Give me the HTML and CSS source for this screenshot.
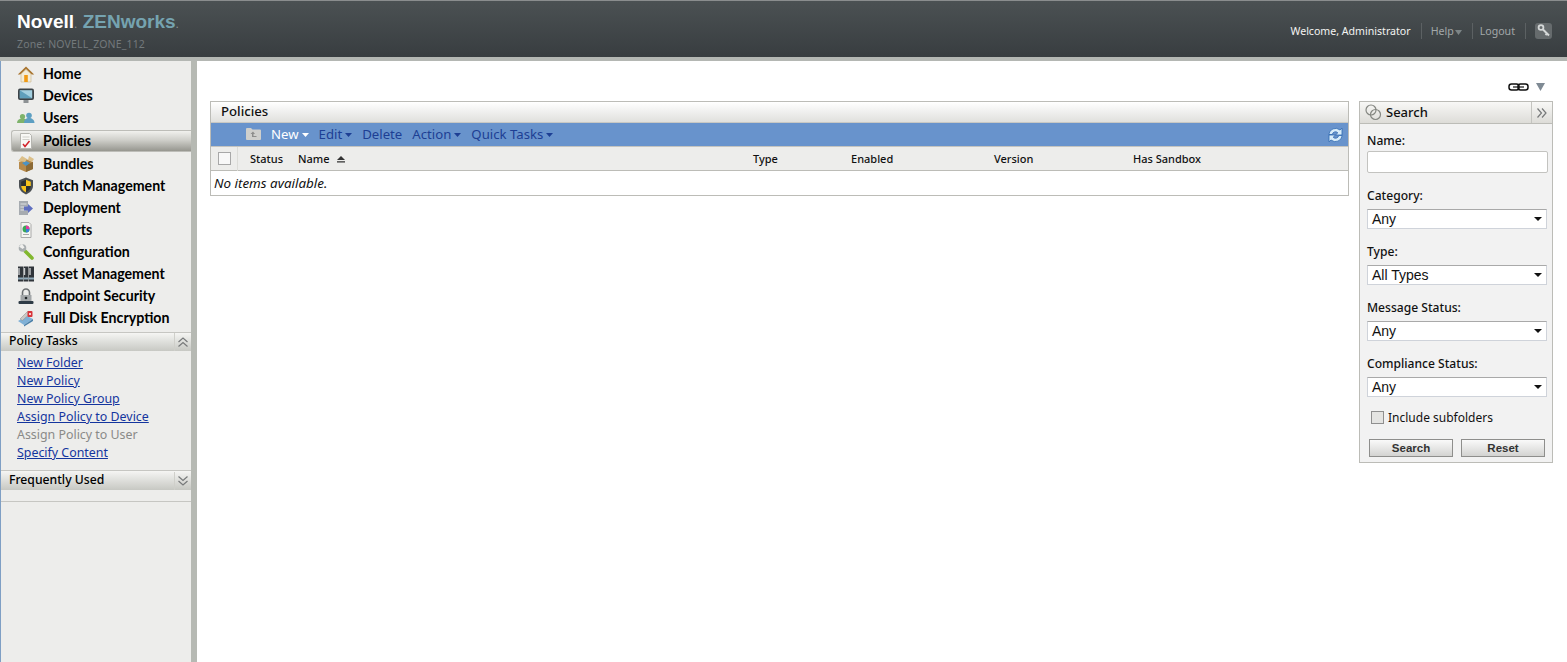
FILE: index.html
```html
<!DOCTYPE html>
<html lang="en">
<head>
<meta charset="utf-8">
<title>Novell ZENworks</title>
<link rel="stylesheet" href="styles.css">
</head>
<body>
<header class="topbar">
  <div class="brand">
    <div class="logo"><span class="logo-novell">Novell<small>.</small></span> <span class="logo-zen">ZENworks<small>.</small></span></div>
    <div class="zone">Zone: NOVELL_ZONE_112</div>
  </div>
  <nav class="topnav">
    <span class="welcome">Welcome, Administrator</span>
    <span class="topsep"></span>
    <span class="toplink">Help<svg class="help-arrow" width="7" height="5" viewBox="0 0 7 5"><path d="M0 0h7L3.5 5z" fill="#7d8587"/></svg></span>
    <span class="topsep"></span>
    <span class="toplink toplink-logout">Logout</span>
    <span class="topsep"></span>
    <span class="keybtn"><svg width="16" height="16" viewBox="0 0 16 16"><circle cx="5" cy="4.500" r="2.400" fill="none" stroke="#d5d8d8" stroke-width="1.800"/><path d="M7 6.500l6 6M11 10.500l-1.500 1.500" stroke="#d5d8d8" stroke-width="2"/></svg></span>
  </nav>
</header>
<div class="shell">
  <aside class="sidebar">
    <ul class="mainnav">
      <li class="navitem"><svg class="navicon" viewBox="0 0 18 18"><path d="M4 9L9 4.500 14 9v8H4z" fill="#f3ecd8" stroke="#c9b78c" stroke-width=".6"/><path d="M9 1.500L.8 9.500h2.400L9 4l5.800 5.500h2.400z" fill="#a9752f"/><path d="M7.200 10h3.600v7H7.200z" fill="#f09a14"/></svg>Home</li>
      <li class="navitem"><svg class="navicon" viewBox="0 0 18 18"><rect x="1" y="1.500" width="16" height="11.500" rx="2" fill="#3c4347"/><rect x="2.800" y="3.200" width="12.400" height="8" fill="#a4d0e0"/><path d="M2.800 3.200l12.400 8H2.800z" fill="#5f9fbb"/><rect x="6.500" y="13" width="5" height="3" fill="#8d9294"/></svg>Devices</li>
      <li class="navitem"><svg class="navicon" viewBox="0 0 18 18"><circle cx="5.500" cy="7.500" r="2.600" fill="#7eb36b"/><path d="M0 14c0-3 2-4.500 5.500-4.500S11 11 11 14z" fill="#7eb36b"/><circle cx="12" cy="6.500" r="2.800" fill="#5d9fc2"/><path d="M7 14c0-3 2-5 5-5s5.500 2 5.500 5z" fill="#5d9fc2"/></svg>Users</li>
      <li class="navitem selected"><svg class="navicon" viewBox="0 0 18 18"><path d="M3.500 1.500h9l2 2v13h-11z" fill="#f8f8f5" stroke="#b5b5b0"/><path d="M5.500 5h7M5.500 7.500h7" stroke="#cfcfca"/><path d="M6 12l2 2.500L12.500 9" fill="none" stroke="#d3222a" stroke-width="1.500"/></svg>Policies</li>
      <li class="navitem"><svg class="navicon" viewBox="0 0 18 18"><path d="M2 7l7-3 7 3v7l-7 3-7-3z" fill="#b78a4a"/><path d="M9 10l7-3v7l-7 3z" fill="#8c6a35"/><path d="M5 8l4-2 4 2-4 3z" fill="#4c93c4"/><path d="M1 6L5 1l5 3-2 3zM12 1l5 3-2 3-4-2z" fill="#dcc08a"/></svg>Bundles</li>
      <li class="navitem"><svg class="navicon" viewBox="0 0 18 18"><path d="M9 .500l7 2.800V9c0 4-3.500 7-7 8.500C5.500 16 2 13 2 9V3.300z" fill="#4a4f52"/><path d="M9 2.800l4.800 1.900V9H9zM9 9v6.300C6.500 14 4.200 12 4.200 9z" fill="#f5c21b"/><path d="M9 2.800V9H4.200V4.700zM9 9h4.800c0 3-2.300 5-4.800 6.300z" fill="#2b2f32"/></svg>Patch Management</li>
      <li class="navitem"><svg class="navicon" viewBox="0 0 18 18"><rect x="2" y="2" width="9" height="14" fill="#a6abb0"/><path d="M3.500 5h6M3.500 8h6M3.500 11h6" stroke="#dfe1e3"/><path d="M7 7.500h4V5l5 4.500-5 4.500v-2.500H7z" fill="#5f6fc0"/></svg>Deployment</li>
      <li class="navitem"><svg class="navicon" viewBox="0 0 18 18"><path d="M4 1.500h8l2 2v13H4z" fill="#f5f5f2" stroke="#aaa"/><circle cx="9" cy="8" r="3.500" fill="#3aa655"/><path d="M9 8V4.500A3.500 3.500 0 0 1 12.500 8z" fill="#e23aa0"/><path d="M9 8h3.500A3.500 3.500 0 0 1 9 11.500z" fill="#3a7fd6"/><path d="M6 13.500h6" stroke="#aaa"/></svg>Reports</li>
      <li class="navitem"><svg class="navicon" viewBox="0 0 18 18"><path d="M8.500 8.500l6.500 6.500" stroke="#82b82f" stroke-width="3.600" stroke-linecap="round"/><circle cx="5.500" cy="5" r="3.800" fill="#a9aeb0"/><path d="M5 .800L7.500 4.500 5.500 6 2 3.500z" fill="#f0f0ee"/></svg>Configuration</li>
      <li class="navitem"><svg class="navicon" viewBox="0 0 18 18"><rect x="1" y="1.500" width="5" height="15" fill="#30353a"/><rect x="6.500" y="1.500" width="5" height="15" fill="#30353a"/><rect x="12" y="1.500" width="5" height="15" fill="#30353a"/><path d="M2 3v7M7.500 3v7M13 3v7" stroke="#c9ccce" stroke-width="1.400"/><path d="M1 13.500h5M12 13.500h5M6.500 13.500h5" stroke="#8fa9b8" stroke-width="2"/></svg>Asset Management</li>
      <li class="navitem"><svg class="navicon" viewBox="0 0 18 18"><path d="M5.500 8V5.500a3.500 3.500 0 0 1 7 0V8" fill="none" stroke="#6d7173" stroke-width="1.600"/><rect x="3.500" y="8" width="11" height="6" fill="#a3a7a9"/><rect x="1.500" y="14" width="15" height="3" rx="1" fill="#2e3b46"/><circle cx="9" cy="11" r="1.300" fill="#25292c"/></svg>Endpoint Security</li>
      <li class="navitem"><svg class="navicon" viewBox="0 0 18 18"><path d="M1 12l9-5 6 3-9 6z" fill="#7fb0d6"/><path d="M7 16l9-6v2l-9 5.500z" fill="#4a7fa8"/><path d="M3 10l8-8 2.500 2-8 7.500z" fill="#c9c9c6" stroke="#8a8a88" stroke-width=".5"/><rect x="10.500" y="2" width="5" height="6" rx="1" fill="#d8353a"/><circle cx="13" cy="5" r="1" fill="#fff"/></svg>Full Disk Encryption</li>
    </ul>
    <section class="panel">
      <div class="panel-head"><span class="panel-title">Policy Tasks</span><span class="panel-toggle"><svg width="12" height="12" viewBox="0 0 12 12"><path d="M1.500 6L6 2l4.500 4M1.500 10.500L6 6.500l4.500 4" fill="none" stroke="#77797a" stroke-width="1.200"/></svg></span></div>
      <ul class="tasks">
        <li><a href="#">New Folder</a></li>
        <li><a href="#">New Policy</a></li>
        <li><a href="#">New Policy Group</a></li>
        <li><a href="#">Assign Policy to Device</a></li>
        <li class="task-off">Assign Policy to User</li>
        <li><a href="#">Specify Content</a></li>
      </ul>
    </section>
    <section class="panel panel-freq">
      <div class="panel-head"><span class="panel-title">Frequently Used</span><span class="panel-toggle"><svg width="12" height="12" viewBox="0 0 12 12"><path d="M1.500 1.500L6 5.500l4.500-4M1.500 6L6 10l4.500-4" fill="none" stroke="#77797a" stroke-width="1.200"/></svg></span></div>
      <div class="freq-body"></div>
    </section>
  </aside>
  <main class="content">
    <div class="linkbar">
      <svg width="21" height="10" viewBox="0 0 21 10"><rect x="1" y="2" width="10" height="6" rx="2.500" fill="none" stroke="#111" stroke-width="1.500"/><rect x="10" y="2" width="10" height="6" rx="2.500" fill="none" stroke="#111" stroke-width="1.500"/><path d="M5 5h11" stroke="#111" stroke-width="1.200"/></svg>
      <svg width="9" height="8" viewBox="0 0 9 8"><path d="M0 0h9L4.500 8z" fill="#7f8a94"/></svg>
    </div>
    <div class="columns">
      <section class="listing">
        <div class="listing-title">Policies</div>
        <div class="toolbar">
          <svg class="up-icon" width="15" height="13" viewBox="0 0 15 13"><path d="M0 2a1 1 0 0 1 1-1h4l1.500 1.500H14a1 1 0 0 1 1 1V12a1 1 0 0 1-1 1H1a1 1 0 0 1-1-1z" fill="#cfcfcc"/><path d="M7 4.500l-2.500 2.500H6v3h4.500V9H7.500V7H9z" fill="#8d8d8b"/></svg>
          <span class="tool tool-new">New<svg class="caret" width="7" height="4" viewBox="0 0 7 4"><path d="M0 0h7L3.500 4z"/></svg></span>
          <span class="tool">Edit<svg class="caret" width="7" height="4" viewBox="0 0 7 4"><path d="M0 0h7L3.500 4z"/></svg></span>
          <span class="tool">Delete</span>
          <span class="tool">Action<svg class="caret" width="7" height="4" viewBox="0 0 7 4"><path d="M0 0h7L3.500 4z"/></svg></span>
          <span class="tool">Quick Tasks<svg class="caret" width="7" height="4" viewBox="0 0 7 4"><path d="M0 0h7L3.500 4z"/></svg></span>
          <svg class="refresh" width="15" height="16" viewBox="0 0 15 16"><path d="M.8 7.500A6.800 6.800 0 0 1 12 3l2-1.800V8H7.500l2.300-2.200A3.200 3.200 0 0 0 4.300 7.500z" fill="#d6ebf9" stroke="#2f68b0" stroke-width=".8"/><path d="M14.200 8.500A6.800 6.800 0 0 1 3 13l-2 1.800V8h6.500l-2.300 2.200a3.200 3.200 0 0 0 5.500-1.700z" fill="#d6ebf9" stroke="#2f68b0" stroke-width=".8"/></svg>
        </div>
        <div class="thead">
          <span class="th-check"><span class="check-box"></span></span>
          <span class="th th-status">Status</span>
          <span class="th th-name">Name<svg class="sort" width="8" height="7" viewBox="0 0 8 7"><path d="M4 0l4 4H0zM0 5h8v.8H0zM0 6.400h8V7H0z" fill="#333"/></svg></span>
          <span class="th th-type">Type</span>
          <span class="th th-enabled">Enabled</span>
          <span class="th th-version">Version</span>
          <span class="th">Has Sandbox</span>
        </div>
        <div class="empty">No items available.</div>
      </section>
      <section class="search">
        <div class="search-head">
          <svg class="search-icon" width="17" height="17" viewBox="0 0 17 17"><circle cx="6" cy="6" r="5" fill="none" stroke="#858782" stroke-width="1.200"/><circle cx="10.500" cy="10.500" r="5" fill="none" stroke="#858782" stroke-width="1.200"/></svg>
          <span class="search-title">Search</span>
          <span class="search-toggle"><svg width="12" height="12" viewBox="0 0 12 12"><path d="M1.500 1.500L5.500 6l-4 4.500M6 1.500L10 6l-4 4.500" fill="none" stroke="#77797a" stroke-width="1.200"/></svg></span>
        </div>
        <form class="search-form">
          <label class="field-label">Name:</label>
          <input class="text-input" type="text">
          <label class="field-label">Category:</label>
          <div class="dropdown">Any</div>
          <label class="field-label">Type:</label>
          <div class="dropdown">All Types</div>
          <label class="field-label">Message Status:</label>
          <div class="dropdown">Any</div>
          <label class="field-label">Compliance Status:</label>
          <div class="dropdown">Any</div>
          <div class="subfolders"><span class="sub-check"></span>Include subfolders</div>
          <div class="buttons"><span class="btn">Search</span><span class="btn">Reset</span></div>
        </form>
      </section>
    </div>
  </main>
</div>
</body>
</html>
```
FILE: styles.css
```css
* { box-sizing: border-box; }
html, body { margin: 0; height: 100%; overflow: hidden; }
body { font-family: "Noto Sans", "DejaVu Sans", sans-serif; background: #fff; color: #111; display: flex; flex-direction: column; }
ul { list-style: none; margin: 0; padding: 0; }

.topbar { height: 61px; flex: none; display: flex; justify-content: space-between; background: linear-gradient(#4b5153, #383d40); border-top: 1px solid #8a8d8e; border-bottom: 4px solid #b4b7b3; color: #fff; }
.brand { padding: 10px 0 0 17px; width: 180px; }
.logo { font-family: "Liberation Sans", sans-serif; font-weight: 700; font-size: 19px; line-height: 22px; white-space: nowrap; }
.logo small { font-size: 12px; color: #8c9496; font-weight: 400; }
.logo-zen { color: #75a3b0; }
.zone { margin-top: 2px; font-size: 10.5px; line-height: 14px; color: #73797c; letter-spacing: 0.15px; }
.topnav { display: flex; align-items: center; padding: 0 15px 0 0; font-size: 10.6px; height: 60px; }
.welcome { color: #f4f4f2; }
.toplink { color: #a3a8a9; }
.toplink-logout { margin-left: -2px; }
.help-arrow { margin-left: 1px; }
.topsep { width: 1px; height: 16px; background: #5c6163; margin: 0 9px 0 10px; }
.keybtn { width: 17px; height: 16px; border-radius: 3px; background: #666b6d; display: flex; align-items: center; justify-content: center; }

.shell { flex: 1; display: flex; min-height: 0; }
.sidebar { width: 197px; flex: none; background: #ededeb; border-left: 1px solid #7f9fc4; border-right: 6px solid #b6b9b3; padding-top: 2px; }
.navitem { height: 22px; display: flex; align-items: center; padding-left: 16px; font-family: "Lato", "Noto Sans", sans-serif; font-size: 14.2px; line-height: 20px; font-weight: 700; color: #000; white-space: nowrap; }
.navicon { width: 18px; height: 18px; margin-right: 8px; flex: none; }
.navlabel { display: block; }
.navitem.selected { margin: 1px 0 1px 10px; padding-left: 5px; border: 1px solid #bdbdb8; border-right: 0; border-radius: 3px 0 0 3px; background: linear-gradient(#f1f1ee 0%, #cfcfca 45%, #96968f 100%); }

.panel-head { height: 19px; display: flex; align-items: center; background: linear-gradient(#f5f5f3, #c7c8c3); border-top: 1px solid #c6c6c2; padding-left: 8px; }
.panel-title { flex: 1; font-size: 12.2px; line-height: 14px; margin-top: -3px; color: #000; font-weight: 500; }
.panel-toggle { width: 17px; height: 18px; border-left: 1px solid #cfcfca; display: flex; align-items: center; justify-content: center; }
.panel { margin-top: 3px; }
.tasks { padding: 3px 0 8px 16px; font-size: 12.4px; line-height: 18px; }
.tasks a { color: #14359e; text-decoration: underline; }
.task-off { color: #8a8a88; }
.panel-freq { margin-top: 0; }
.panel-freq .panel-head { height: 20px; }
.panel-freq .panel-title { margin-top: -1px; }
.freq-body { height: 12px; border-bottom: 1px solid #c6c6c2; }

.content { flex: 1; min-width: 0; padding: 0 14px 0 13px; }
.linkbar { height: 40px; display: flex; align-items: center; justify-content: flex-end; gap: 7px; padding: 12px 8px 0 0; }
.columns { display: flex; align-items: flex-start; gap: 10px; }
.listing { flex: 1; min-width: 0; border: 1px solid #bcbcb7; }
.listing-title { height: 20px; padding-left: 10px; font-size: 13.2px; font-weight: 500; line-height: 18px; background: linear-gradient(#fff, #e0e0dd); }
.toolbar { height: 24px; background: #6893cc; display: flex; align-items: center; padding: 0 5px 2px 35px; font-size: 13.2px; color: #1d3f94; gap: 10px; border-top: 1px solid #c8c8c4; }
.up-icon { margin-right: 0; }
.tool { white-space: nowrap; }
.tool-new { color: #fff; }
.caret { margin-left: 3px; vertical-align: 2px; fill: #1d3f94; }
.tool-new .caret { fill: #fff; }
.refresh { margin-left: auto; margin-top: 2px; }
.thead { height: 25px; display: flex; align-items: center; background: #ededeb; border-top: 1px solid #c4c4c0; border-bottom: 1px solid #bcbcb7; font-size: 11px; font-weight: 500; }
.th-check { width: 27px; height: 24px; border-right: 1px solid #dcdcd8; display: flex; align-items: center; justify-content: center; }
.check-box { width: 13px; height: 13px; background: #f8f8f8; border: 1px solid #a8a8a8; }
.th { white-space: nowrap; }
.th-status { margin-left: 12px; width: 48px; }
.th-name { width: 455px; }
.sort { margin-left: 7px; }
.th-type { width: 98px; }
.th-enabled { width: 143px; }
.th-version { width: 139px; }
.empty { height: 24px; padding-left: 3px; font-size: 13.4px; font-style: italic; line-height: 25px; color: #111; }

.search { width: 194px; flex: none; border: 1px solid #bcbcb7; background: #f2f2f2; height: 362px; }
.search-head { height: 22px; display: flex; align-items: center; background: linear-gradient(#f8f8f6, #dddcd8); border-bottom: 1px solid #bcbcb7; padding-left: 5px; }
.search-title { flex: 1; margin-left: 4px; font-size: 13px; line-height: 18px; margin-top: -2px; font-weight: 500; }
.search-toggle { width: 21px; height: 21px; border-left: 1px solid #c4c4c0; display: flex; align-items: center; justify-content: center; }
.search-form { padding: 8px 4px 0 7px; display: block; }
.field-label { display: block; font-size: 12.1px; font-weight: 500; line-height: 17px; margin-top: 14px; margin-bottom: 5px; }
.field-label:first-child { margin-top: 0; margin-bottom: 2px; }
.text-input { display: block; width: 181px; height: 22px; border: 1px solid #c3c3c0; background: #fff; border-radius: 2px; margin-bottom: 13px; padding: 0; }
.dropdown { position: relative; height: 20px; width: 180px; background: #fff; border: 1px solid #cfd3da; border-top-color: #a9a9a9; font-family: "Liberation Sans", sans-serif; font-size: 14px; line-height: 18px; padding-left: 4px; }
.dropdown::after { content: ""; position: absolute; right: 4px; top: 7px; border-left: 4px solid transparent; border-right: 4px solid transparent; border-top: 4px solid #111; }
.subfolders { display: flex; align-items: center; font-size: 12px; margin: 11px 0 0 4px; height: 18px; }
.sub-check { width: 13px; height: 13px; background: #e4e4e2; border: 1px solid #8f8f8f; margin-right: 4px; }
.buttons { display: flex; gap: 8px; margin: 13px 0 0 2px; }
.btn { width: 84px; height: 18px; border: 1px solid #8e8e8c; background: linear-gradient(#fafafa, #d3d3d1); font-family: "Liberation Sans", sans-serif; font-size: 11.500px; font-weight: 700; color: #333; text-align: center; line-height: 17px; }
```
